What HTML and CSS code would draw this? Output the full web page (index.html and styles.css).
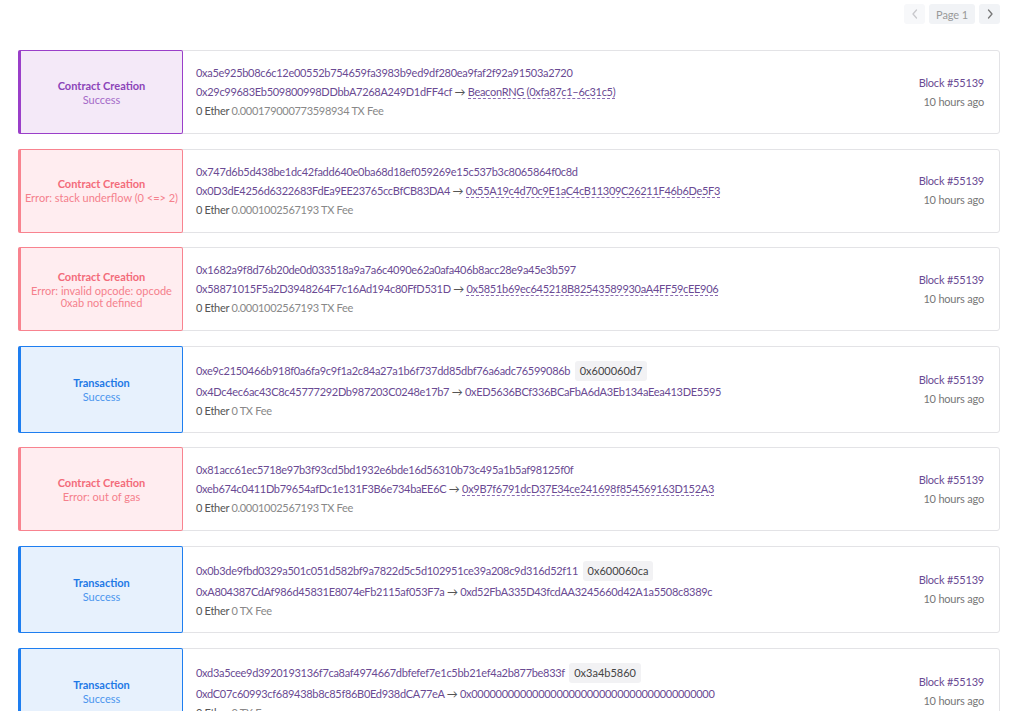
FILE: index.html
```html
<!DOCTYPE html>
<html>
<head>
<meta charset="utf-8">
<link rel="stylesheet" href="styles.css">
</head>
<body>
<div class="page">
  <div class="pager">
    <span class="pbtn disabled"><svg width="8" height="10" viewBox="0 0 8 10"><path d="M5.5 1 L2 5 L5.5 9" fill="none" stroke="currentColor" stroke-width="1.3" stroke-linecap="round" stroke-linejoin="round"/></svg></span>
    <span class="pbtn label">Page 1</span>
    <span class="pbtn"><svg width="8" height="10" viewBox="0 0 8 10"><path d="M2.5 1 L6 5 L2.5 9" fill="none" stroke="currentColor" stroke-width="1.3" stroke-linecap="round" stroke-linejoin="round"/></svg></span>
  </div>
  <div class="list">
    <div class="card">
      <div class="status cc-ok"><div class="st-title">Contract Creation</div><div class="st-sub">Success</div></div>
      <div class="info">
        <div class="ln">0xa5e925b08c6c12e00552b754659fa3983b9ed9df280ea9faf2f92a91503a2720</div>
        <div class="ln">0x29c99683Eb509800998DDbbA7268A249D1dFF4cf <span class="arr">&rarr;</span> <span class="lnk">BeaconRNG (0xfa87c1–6c31c5)</span></div>
        <div class="ln"><span class="eth">0 Ether</span> <span class="fee">0.000179000773598934 TX Fee</span></div>
      </div>
      <div class="meta"><div class="blk">Block #55139</div><div class="ago">10 hours ago</div></div>
    </div>
    <div class="card">
      <div class="status cc-err"><div class="st-title">Contract Creation</div><div class="st-sub">Error: stack underflow (0 &lt;=&gt; 2)</div></div>
      <div class="info">
        <div class="ln">0x747d6b5d438be1dc42fadd640e0ba68d18ef059269e15c537b3c8065864f0c8d</div>
        <div class="ln">0x0D3dE4256d6322683FdEa9EE23765ccBfCB83DA4 <span class="arr">&rarr;</span> <span class="lnk">0x55A19c4d70c9E1aC4cB11309C26211F46b6De5F3</span></div>
        <div class="ln"><span class="eth">0 Ether</span> <span class="fee">0.0001002567193 TX Fee</span></div>
      </div>
      <div class="meta"><div class="blk">Block #55139</div><div class="ago">10 hours ago</div></div>
    </div>
    <div class="card">
      <div class="status cc-err"><div class="st-title">Contract Creation</div><div class="st-sub">Error: invalid opcode: opcode<br>0xab not defined</div></div>
      <div class="info">
        <div class="ln">0x1682a9f8d76b20de0d033518a9a7a6c4090e62a0afa406b8acc28e9a45e3b597</div>
        <div class="ln">0x58871015F5a2D3948264F7c16Ad194c80FfD531D <span class="arr">&rarr;</span> <span class="lnk">0x5851b69ec645218B82543589930aA4FF59cEE906</span></div>
        <div class="ln"><span class="eth">0 Ether</span> <span class="fee">0.0001002567193 TX Fee</span></div>
      </div>
      <div class="meta"><div class="blk">Block #55139</div><div class="ago">10 hours ago</div></div>
    </div>
    <div class="card">
      <div class="status tx-ok"><div class="st-title">Transaction</div><div class="st-sub">Success</div></div>
      <div class="info">
        <div class="ln ln-badge">0xe9c2150466b918f0a6fa9c9f1a2c84a27a1b6f737dd85dbf76a6adc76599086b <span class="badge">0x600060d7</span></div>
        <div class="ln">0x4Dc4ec6ac43C8c45777292Db987203C0248e17b7 <span class="arr">&rarr;</span> 0xED5636BCf336BCaFbA6dA3Eb134aEea413DE5595</div>
        <div class="ln"><span class="eth">0 Ether</span> <span class="fee">0 TX Fee</span></div>
      </div>
      <div class="meta"><div class="blk">Block #55139</div><div class="ago">10 hours ago</div></div>
    </div>
    <div class="card">
      <div class="status cc-err"><div class="st-title">Contract Creation</div><div class="st-sub">Error: out of gas</div></div>
      <div class="info">
        <div class="ln">0x81acc61ec5718e97b3f93cd5bd1932e6bde16d56310b73c495a1b5af98125f0f</div>
        <div class="ln">0xeb674c0411Db79654afDc1e131F3B6e734baEE6C <span class="arr">&rarr;</span> <span class="lnk">0x9B7f6791dcD37E34ce241698f854569163D152A3</span></div>
        <div class="ln"><span class="eth">0 Ether</span> <span class="fee">0.0001002567193 TX Fee</span></div>
      </div>
      <div class="meta"><div class="blk">Block #55139</div><div class="ago">10 hours ago</div></div>
    </div>
    <div class="card">
      <div class="status tx-ok"><div class="st-title">Transaction</div><div class="st-sub">Success</div></div>
      <div class="info">
        <div class="ln ln-badge">0x0b3de9fbd0329a501c051d582bf9a7822d5c5d102951ce39a208c9d316d52f11 <span class="badge">0x600060ca</span></div>
        <div class="ln">0xA804387CdAf986d45831E8074eFb2115af053F7a <span class="arr">&rarr;</span> 0xd52FbA335D43fcdAA3245660d42A1a5508c8389c</div>
        <div class="ln"><span class="eth">0 Ether</span> <span class="fee">0 TX Fee</span></div>
      </div>
      <div class="meta"><div class="blk">Block #55139</div><div class="ago">10 hours ago</div></div>
    </div>
    <div class="card">
      <div class="status tx-ok"><div class="st-title">Transaction</div><div class="st-sub">Success</div></div>
      <div class="info">
        <div class="ln ln-badge">0xd3a5cee9d3920193136f7ca8af4974667dbfefef7e1c5bb21ef4a2b877be833f <span class="badge">0x3a4b5860</span></div>
        <div class="ln">0xdC07c60993cf689438b8c85f86B0Ed938dCA77eA <span class="arr">&rarr;</span> 0x0000000000000000000000000000000000000000</div>
        <div class="ln"><span class="eth">0 Ether</span> <span class="fee">0 TX Fee</span></div>
      </div>
      <div class="meta"><div class="blk">Block #55139</div><div class="ago">10 hours ago</div></div>
    </div>
  </div>
</div>
</body>
</html>
```
FILE: styles.css
```css
html, body {
  margin: 0;
  padding: 0;
  background: #ffffff;
}
body {
  font-family: "Lato", "Noto Sans", sans-serif;
  font-size: 11px;
  color: #555;
}
.page {
  padding: 4px 24px 0 18px;
}
.pager {
  display: flex;
  justify-content: flex-end;
  gap: 4px;
  height: 20px;
}
.pbtn {
  display: flex;
  align-items: center;
  justify-content: center;
  width: 21px;
  height: 20px;
  background: #f1f3f6;
  color: #777;
  border-radius: 3px;
}
.pbtn.disabled {
  color: #c8c8cc;
  background: #f7f8fa;
}
.pbtn.label {
  width: auto;
  font-size: 11px;
  padding: 0 7px;
  color: #999;
  letter-spacing: -0.1px;
}
.list {
  margin-top: 26px;
  display: flex;
  flex-direction: column;
  gap: 14.6px;
}
.card {
  display: flex;
  border: 1px solid #e3e3e6;
  border-radius: 3px;
  min-height: 84px;
  box-sizing: border-box;
  background: #fff;
}
.status {
  width: 161px;
  flex: none;
  margin: -1px 0 -1px -1px;
  border: 1px solid;
  border-left-width: 3px;
  border-radius: 2px;
  display: flex;
  flex-direction: column;
  align-items: center;
  justify-content: center;
  text-align: center;
}
.st-title {
  font-weight: bold;
  line-height: 14px;
}
.st-sub {
  line-height: 12px;
  margin-top: 1px;
}
.cc-ok { background: #f4e9f8; border-color: #9a3fc9; }
.cc-ok .st-title { color: #8b44b8; }
.cc-ok .st-sub { color: #a46ac8; }
.cc-err { background: #ffedf0; border-color: #f8838f; }
.cc-err .st-title { color: #f36b7a; }
.cc-err .st-sub { color: #f5808c; }
.tx-ok { background: #e7f1fd; border-color: #1e7ef0; }
.tx-ok .st-title { color: #1f79e6; }
.tx-ok .st-sub { color: #4b95ee; }
.info {
  flex: 1;
  padding: 12px 13px;
  display: flex;
  flex-direction: column;
  gap: 1px;
  justify-content: center;
  letter-spacing: -0.3px;
}
.ln {
  line-height: 18px;
  color: #6a4a93;
  white-space: nowrap;
}
.ln-badge {
  line-height: 23px;
}
.arr { color: #555; }
.lnk {
  border-bottom: 1px dashed #8a6ab3;
}
.eth { color: #555; }
.fee { color: #888; }
.badge {
  display: inline-block;
  background: #f2f2f4;
  color: #444;
  border-radius: 3px;
  padding: 0 5px;
  margin-left: 2px;
  line-height: 20px;
  letter-spacing: 0;
}
.meta {
  flex: none;
  padding: 0 15px 0 10px;
  display: flex;
  flex-direction: column;
  justify-content: center;
  align-items: flex-end;
  gap: 1px;
  line-height: 18px;
  letter-spacing: -0.2px;
}
.blk { color: #6a4a93; }
.ago { color: #777; }
```
